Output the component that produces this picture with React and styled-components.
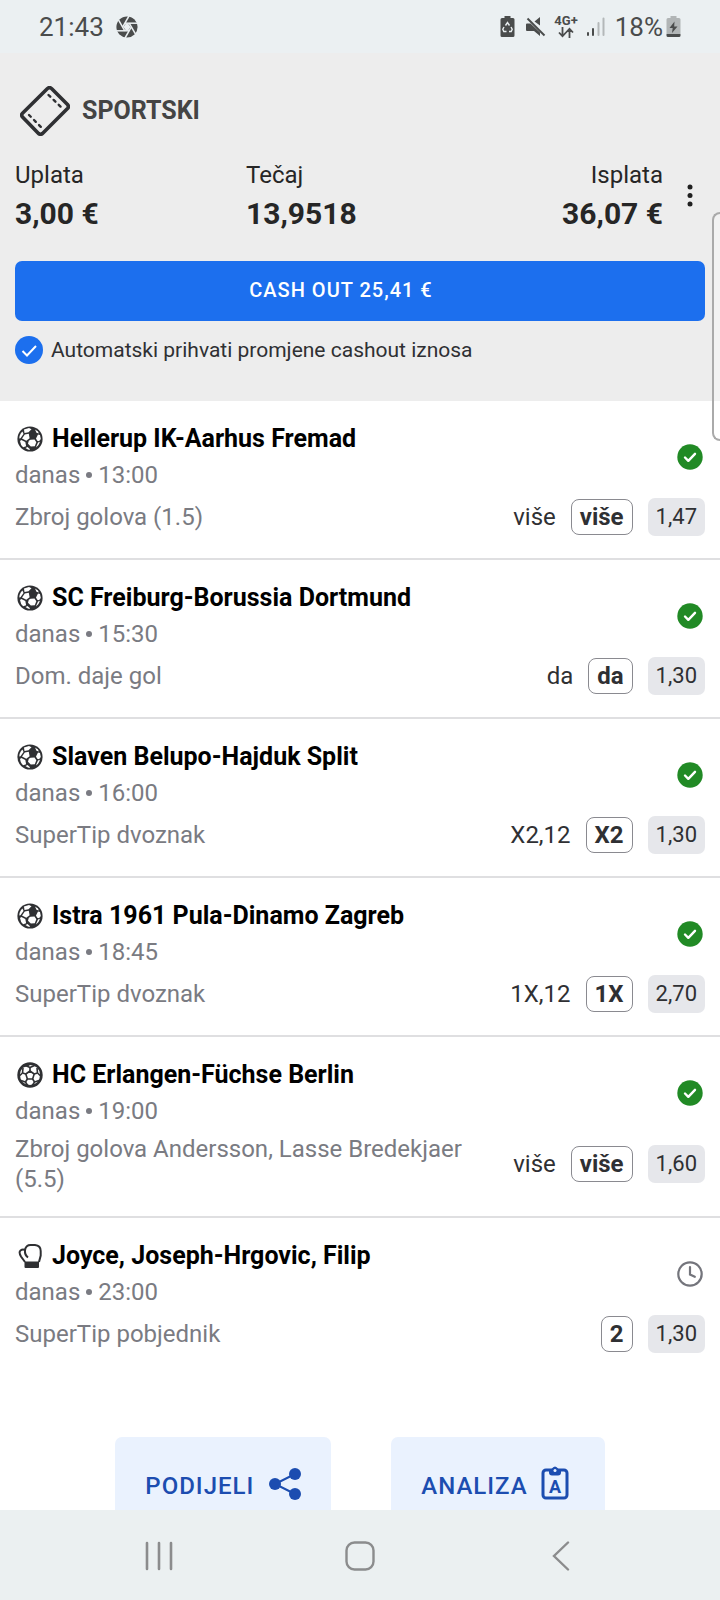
import React from 'react';
import styled, { createGlobalStyle } from 'styled-components';

const INK = '#2f3033';
const GREY = '#7a7b82';
const STATUS_INK = '#4a4c4c';
const BLUE = '#1c4db0';

const GlobalStyle = createGlobalStyle`
  * {
    box-sizing: border-box;
  }

  body {
    margin: 0;
    background: #ffffff;
    color: ${INK};
    font-family: Roboto, "Liberation Sans", sans-serif;
    font-size: 24px;
    line-height: 30px;
  }

  button {
    border: 0;
    padding: 0;
    background: none;
    color: inherit;
    font: inherit;
  }

  svg {
    display: block;
    flex: none;
  }
`;

const Screen = styled.div`
  position: relative;
  display: flex;
  flex-direction: column;
  height: 100vh;
`;

const StatusBar = styled.div`
  display: flex;
  justify-content: space-between;
  align-items: center;
  flex: none;
  height: 53px;
  padding: 0 39px;
  background: #ebf0f2;
  color: ${STATUS_INK};
  font-size: 26px;
`;

const StatusGroup = styled.div`
  display: flex;
  align-items: center;
  gap: ${({ $gap }) => $gap}px;
`;

const Network = styled.div`
  display: flex;
  flex-direction: column;
  align-items: center;
  font-size: 13px;
  font-weight: 700;
  line-height: 12px;
`;

const Charge = styled.div`
  display: flex;
  align-items: center;
  gap: 3px;
`;

const Content = styled.main`
  flex: 1;
  min-height: 0;
  overflow: hidden;
`;

const Summary = styled.header`
  padding: 33px 15px 37px;
  background: #ededed;
`;

const TicketTitle = styled.h1`
  display: flex;
  align-items: center;
  gap: 12px;
  margin: 0 0 24px;
  padding-left: 5px;
  color: #444444;
  font-size: 25px;
  font-weight: 700;
  line-height: 50px;
`;

const Totals = styled.div`
  display: flex;
  align-items: center;
  gap: 12px;
  margin-bottom: 30px;
`;

const Amounts = styled.dl`
  display: grid;
  flex: 1;
  grid-template-columns: repeat(3, 1fr);
  gap: 45px;
  margin: 0;
  color: #262626;
`;

const Amount = styled.div`
  text-align: ${({ $align }) => $align || 'left'};
`;

const AmountLabel = styled.dt`
  margin-bottom: 7px;
`;

const AmountValue = styled.dd`
  margin: 0;
  font-size: 30px;
  font-weight: 700;
  line-height: 34px;
`;

const CashOutButton = styled.button`
  display: block;
  width: 100%;
  height: 60px;
  margin-bottom: 15px;
  padding: 0 38px 2px 0;
  border-radius: 7px;
  background: #1c6fee;
  color: #ffffff;
  font-size: 20px;
  font-weight: 500;
  letter-spacing: 1px;
`;

const AutoAccept = styled.label`
  display: flex;
  align-items: center;
  gap: 8px;
  color: ${INK};
  font-size: 21px;
  line-height: 28px;
`;

const RoundCheckbox = styled.input`
  flex: none;
  width: 28px;
  height: 28px;
  margin: 0;
  border-radius: 50%;
  appearance: none;
  background: #ffffff;

  &:checked {
    background: #1c6fee url("data:image/svg+xml,%3Csvg xmlns='http://www.w3.org/2000/svg' viewBox='0 0 28 28'%3E%3Cpath d='M7.500 15l4.500 4.500 9-9.500' fill='none' stroke='white' stroke-width='2'/%3E%3C/svg%3E") center / 28px;
  }
`;

const MatchList = styled.ul`
  margin: 0;
  padding: 0;
  list-style: none;
`;

const MatchItem = styled.li`
  padding: 23px 15px 22px;

  & + & {
    border-top: 2px solid #dfdfe1;
  }
`;

const MatchTop = styled.div`
  display: flex;
  justify-content: space-between;
  align-items: center;
  margin-bottom: 8px;
`;

const Teams = styled.h2`
  display: flex;
  align-items: center;
  gap: 7px;
  margin: 0 0 6px;
  color: #000000;
  font-size: 25px;
  font-weight: 700;
  line-height: 30px;
`;

const Kickoff = styled.div`
  display: flex;
  align-items: center;
  gap: 6px;
  color: ${GREY};
`;

const Dot = styled.span`
  width: 6px;
  height: 6px;
  border-radius: 50%;
  background: currentColor;
`;

const MatchBet = styled.div`
  display: flex;
  align-items: center;
  gap: 15px;
  min-height: 38px;
`;

const Market = styled.div`
  flex: 1;
  padding-right: 20px;
  color: ${GREY};
`;

const Pick = styled.span`
  height: 36px;
  padding: 0 8px;
  border: 1px solid #8a8a90;
  border-radius: 8px;
  font-weight: 700;
  line-height: 34px;
`;

const Odds = styled.span`
  height: 38px;
  padding: 0 8px;
  border-radius: 7px;
  background: #e6e7eb;
  font-size: 22px;
  line-height: 37px;
`;

const Actions = styled.div`
  display: flex;
  justify-content: center;
  gap: 60px;
  padding: 62px 15px 30px;
`;

const ActionButton = styled.button`
  display: flex;
  align-items: center;
  gap: 14px;
  height: 98px;
  padding: 0 30px;
  border-radius: 7px;
  background: #eaf2fe;
  color: ${BLUE};
  font-weight: 500;
  letter-spacing: 1px;

  svg {
    margin-bottom: 4px;
  }
`;

const NavBar = styled.nav`
  display: grid;
  flex: none;
  grid-template-columns: repeat(3, 1fr);
  height: 90px;
  padding: 2px 58px 0;
  background: #ebf0f1;
`;

const NavButton = styled.button`
  display: flex;
  align-items: center;
  justify-content: center;
`;

// drawer handle of the phone, runs off the right edge over the page
const EdgeHandle = styled.div`
  position: absolute;
  top: 212px;
  right: 0;
  width: 8px;
  height: 229px;
  border: 2px solid #aaaaaa;
  border-right: 0;
  border-radius: 8px 0 0 8px;
  background: rgba(255, 255, 255, 0.3);
`;

const ApertureIcon = () => (
  <svg width="22" height="22" viewBox="0 0 22 22">
    <circle cx="11" cy="11" r="10.600" fill={STATUS_INK} />
    <g stroke="#ebf0f2" strokeWidth="1.500" fill="none">
      {[0, 60, 120, 180, 240, 300].map((angle) => (
        <path key={angle} d="M8.800 7.200H21.500" transform={`rotate(${angle} 11 11)`} />
      ))}
    </g>
    <path d="M9.500 8h3l2 3-2 3h-3l-2-3z" fill="#ebf0f2" />
  </svg>
);

const EcoBatteryIcon = () => (
  <svg width="15" height="22" viewBox="0 0 15 22">
    <path d="M4.500 0h6v2H13q1.500 0 1.500 1.500v16Q14.500 21 13 21H2Q.5 21 .5 19.500v-16Q.5 2 2 2h2.500z" fill={STATUS_INK} />
    <path d="M5.500 9.500l2-3 2 3M11 11l1.200 2.300-1 2.200H9M6.500 15.500H3.800l-1-2.200L4 11" fill="none" stroke="#ebf0f2" strokeWidth="1.400" />
  </svg>
);

const MuteIcon = () => (
  <svg width="23" height="20" viewBox="-3 0 23 20">
    <path d="M8.500 4.500L14 0v8.500zM1 6.500h3.500l9.500 9V19l-6-5H1q-1 0-1-1V7.500q0-1 1-1z" fill={STATUS_INK} />
    <path d="M1.500 1.500l17 17" stroke={STATUS_INK} strokeWidth="2" />
  </svg>
);

const DataArrowsIcon = () => (
  <svg width="18" height="11" viewBox="0 0 18 11" fill="none" stroke={STATUS_INK} strokeWidth="1.800">
    <path d="M5.500 0v9M2 5.500L5.500 9.200 9 5.500M12.500 11V2M9 5.500l3.500-3.700L16 5.500" />
  </svg>
);

const SignalIcon = () => (
  <svg width="21" height="20" viewBox="0 0 21 20" strokeWidth="2" strokeLinecap="round">
    <path d="M2 16v2M7 12v6" stroke={STATUS_INK} />
    <path d="M12.500 6v12M17.500 1.500V18" stroke="#b4b8b9" />
  </svg>
);

const ChargingIcon = () => (
  <svg width="15" height="22" viewBox="0 0 15 22">
    <path d="M4.500 0h6v2H13q1.500 0 1.500 1.500V18H.5V3.500Q.5 2 2 2h2.500z" fill="#b1b5b6" />
    <path d="M.5 18h14v1.500Q14.500 21 13 21H2Q.5 21 .5 19.500z" fill={STATUS_INK} />
    <path d="M8.500 5.500L3.500 12h3.200L6 17l5.500-6.500H8.200z" fill={STATUS_INK} />
  </svg>
);

const TicketIcon = () => (
  <svg width="50" height="50" viewBox="0 0 50 50" fill="none" stroke={INK}>
    <path d="M27.500 2.500Q29.500 .8 31.500 2.500L47.500 18.500Q49.300 20.500 47.500 22.500L22.500 47.500Q20.500 49 18.500 47.500L2.500 31Q.8 29 2.500 27.200z" strokeWidth="3.600" strokeLinejoin="round" />
    <path d="M28.500 9L41.500 21.500M9 29L21.500 41.500" strokeWidth="2.400" strokeDasharray="2.500 4.600" strokeLinecap="round" />
  </svg>
);

const MoreIcon = () => (
  <svg width="30" height="30" viewBox="0 0 30 30" fill="#202020">
    <circle cx="15" cy="6" r="2.500" />
    <circle cx="15" cy="14.500" r="2.500" />
    <circle cx="15" cy="23" r="2.500" />
  </svg>
);

const FootballIcon = () => (
  <svg width="30" height="30" viewBox="0 0 30 30">
    <circle cx="15" cy="15" r="12.600" fill={INK} />
    <g fill="#ffffff">
      <path d="M9 5.500l5-1.500 2.500 1.200-3 3-4 .8z" />
      <path d="M20 5.500l3 2 .8 2-2.300-.7z" />
      <path d="M6 9l1.500-1.500L8.500 10l-3 4.200-1.200.3Q4.300 11.500 6 9z" />
      <path d="M9.800 10.500l4-.8.800 4.500-3.300 2.500L7 14.500z" />
      <path d="M6.300 16l4 2 .8 4.200-3 1Q5.500 21 5 17z" />
      <path d="M15.500 15.800l4-.3 1.800 2.800-1.500 3.900-4 .3-2.800-2.700.8-3z" />
      <path d="M23 10.500l2 .5.800 4-1.800 2.200-1.800-.5L21 14.500z" />
      <path d="M10.500 24l2-1 2.500 2.300-.7.700q-2-.3-3.800-2z" />
      <path d="M23 18.500l2-.7q-1 3.700-4 5.700l.5-1.500z" />
    </g>
  </svg>
);

const HandballIcon = () => (
  <svg width="30" height="30" viewBox="0 0 30 30" fill="none" stroke={INK} strokeLinejoin="round">
    <circle cx="15" cy="15" r="11.400" strokeWidth="2.600" />
    <g strokeWidth="1.600">
      <path d="M15 11l4.200 3-1.600 5h-5.200l-1.600-5z" />
      <path d="M15 11V7.500M19.200 14l3.300-1M17.600 19l2 3M12.400 19l-2 3M10.800 14l-3.300-1" />
      <path d="M15 7.500l4.500-2M15 7.500l-4.500-2M22.500 13l-.5-5M22.500 13l3.700 3.500M19.600 22l4.400-1.500M19.600 22L17 26M10.400 22L13 26M10.400 22L6 20.500M7.500 13l-3.700 3.500M7.500 13L8 8" />
    </g>
    <path d="M6 8q2-3 5-4l4 1.500L10 7z" fill={INK} stroke="none" />
  </svg>
);

const BoxingIcon = () => (
  <svg width="30" height="30" viewBox="0 0 30 30">
    <path d="M10 21L6 15.500Q3.500 11 5.500 9.500T10 9Q11 4 15.500 4h4.500Q25.700 4.500 25.700 10v4.500L24 21" fill="none" stroke={INK} strokeWidth="2" />
    <path d="M10 9q-.5 5 3 7.500" fill="none" stroke={INK} strokeWidth="2" />
    <path d="M9.500 20.500H24V26q0 1-1 1H10.500q-1 0-1-1z" fill={INK} />
  </svg>
);

const WonIcon = () => (
  <svg width="30" height="30" viewBox="0 0 30 30" role="img" aria-label="dobitan">
    <circle cx="15" cy="15" r="12.700" fill="#218a25" />
    <path d="M10 15.500l3.300 3.300 6.700-7" fill="none" stroke="#ffffff" strokeWidth="2.400" strokeLinecap="round" strokeLinejoin="round" />
  </svg>
);

const PendingIcon = () => (
  <svg width="30" height="30" viewBox="0 0 30 30" role="img" aria-label="u tijeku" fill="none" stroke="#74757c">
    <circle cx="15" cy="15" r="11.700" strokeWidth="2.200" />
    <path d="M15 8v7.500l4.800 2.300" strokeWidth="2.200" strokeLinecap="round" />
  </svg>
);

const ShareIcon = () => (
  <svg width="33" height="32" viewBox="0 0 33 32" fill={BLUE} stroke={BLUE}>
    <path d="M27 6L7 16l20 10" fill="none" strokeWidth="2" />
    <g stroke="none">
      <circle cx="27" cy="6" r="6" />
      <circle cx="7" cy="16" r="6" />
      <circle cx="27" cy="26" r="6" />
    </g>
  </svg>
);

const AnalysisIcon = () => (
  <svg width="33" height="36" viewBox="3 1 33 36" overflow="visible">
    <rect x="4" y="5" width="24" height="28" rx="3" fill="none" stroke={BLUE} strokeWidth="3" />
    <path d="M10 4h2.500q3.500-5 7 0H22v3.500q0 3-3 3h-6q-3 0-3-3z" fill={BLUE} />
    <circle cx="16" cy="5.500" r="1.500" fill="#eaf2fe" />
    <text x="16" y="28" fill={BLUE} fontSize="18" fontWeight="700" letterSpacing="0" textAnchor="middle">A</text>
  </svg>
);

const SPORT_ICONS = {
  boxing: BoxingIcon,
  football: FootballIcon,
  handball: HandballIcon,
};

const MATCHES = [
  { sport: 'football', teams: 'Hellerup IK-Aarhus Fremad', time: '13:00', market: 'Zbroj golova (1.5)', result: 'više', pick: 'više', odds: '1,47', won: true },
  { sport: 'football', teams: 'SC Freiburg-Borussia Dortmund', time: '15:30', market: 'Dom. daje gol', result: 'da', pick: 'da', odds: '1,30', won: true },
  { sport: 'football', teams: 'Slaven Belupo-Hajduk Split', time: '16:00', market: 'SuperTip dvoznak', result: 'X2,12', pick: 'X2', odds: '1,30', won: true },
  { sport: 'football', teams: 'Istra 1961 Pula-Dinamo Zagreb', time: '18:45', market: 'SuperTip dvoznak', result: '1X,12', pick: '1X', odds: '2,70', won: true },
  { sport: 'handball', teams: 'HC Erlangen-Füchse Berlin', time: '19:00', market: 'Zbroj golova Andersson, Lasse Bredekjaer (5.5)', result: 'više', pick: 'više', odds: '1,60', won: true },
  { sport: 'boxing', teams: 'Joyce, Joseph-Hrgovic, Filip', time: '23:00', market: 'SuperTip pobjednik', pick: '2', odds: '1,30', won: false },
];

const Match = ({ match }) => {
  const SportIcon = SPORT_ICONS[match.sport];
  return (
    <MatchItem>
      <MatchTop>
        <div>
          <Teams>
            <SportIcon />
            {match.teams}
          </Teams>
          <Kickoff>
            <span>danas</span>
            <Dot />
            <time>{match.time}</time>
          </Kickoff>
        </div>
        { match.won ? <WonIcon /> : <PendingIcon /> }
      </MatchTop>
      <MatchBet>
        <Market>{match.market}</Market>
        { match.result && <span>{match.result}</span> }
        <Pick>{match.pick}</Pick>
        <Odds>{match.odds}</Odds>
      </MatchBet>
    </MatchItem>
  );
};

const App = () => (
  <Screen>
    <GlobalStyle />
    <StatusBar>
      <StatusGroup $gap={12}>
        <span>21:43</span>
        <ApertureIcon />
      </StatusGroup>
      <StatusGroup $gap={8}>
        <EcoBatteryIcon />
        <MuteIcon />
        <Network>
          4G+
          <DataArrowsIcon />
        </Network>
        <SignalIcon />
        <Charge>
          <span>18%</span>
          <ChargingIcon />
        </Charge>
      </StatusGroup>
    </StatusBar>
    <Content>
      <Summary>
        <TicketTitle>
          <TicketIcon />
          SPORTSKI
        </TicketTitle>
        <Totals>
          <Amounts>
            <Amount>
              <AmountLabel>Uplata</AmountLabel>
              <AmountValue>3,00 €</AmountValue>
            </Amount>
            <Amount>
              <AmountLabel>Tečaj</AmountLabel>
              <AmountValue>13,9518</AmountValue>
            </Amount>
            <Amount $align="right">
              <AmountLabel>Isplata</AmountLabel>
              <AmountValue>36,07 €</AmountValue>
            </Amount>
          </Amounts>
          <button type="button" aria-label="Više opcija">
            <MoreIcon />
          </button>
        </Totals>
        <CashOutButton type="button">CASH OUT 25,41 €</CashOutButton>
        <AutoAccept>
          <RoundCheckbox type="checkbox" defaultChecked />
          Automatski prihvati promjene cashout iznosa
        </AutoAccept>
      </Summary>
      <MatchList>
        {MATCHES.map((match) => <Match key={match.teams} match={match} />)}
      </MatchList>
      <Actions>
        <ActionButton type="button">
          PODIJELI
          <ShareIcon />
        </ActionButton>
        <ActionButton type="button">
          ANALIZA
          <AnalysisIcon />
        </ActionButton>
      </Actions>
    </Content>
    <NavBar>
      <NavButton type="button" aria-label="Nedavne aplikacije">
        <svg width="30" height="30" viewBox="0 0 30 30" stroke="#8b8c8d" strokeWidth="2.600" strokeLinecap="round">
          <path d="M3 2v26M15 2v26M27 2v26" />
        </svg>
      </NavButton>
      <NavButton type="button" aria-label="Početni zaslon">
        <svg width="30" height="30" viewBox="0 0 30 30" fill="none" stroke="#8b8c8d" strokeWidth="2.400">
          <rect x="1.500" y="1.500" width="27" height="27" rx="8" />
        </svg>
      </NavButton>
      <NavButton type="button" aria-label="Natrag">
        <svg width="18" height="30" viewBox="0 0 18 30" fill="none" stroke="#8b8c8d" strokeWidth="2.400" strokeLinecap="round">
          <path d="M16 1.500L2 15l14 13.500" />
        </svg>
      </NavButton>
    </NavBar>
    <EdgeHandle />
  </Screen>
);

export default App;
